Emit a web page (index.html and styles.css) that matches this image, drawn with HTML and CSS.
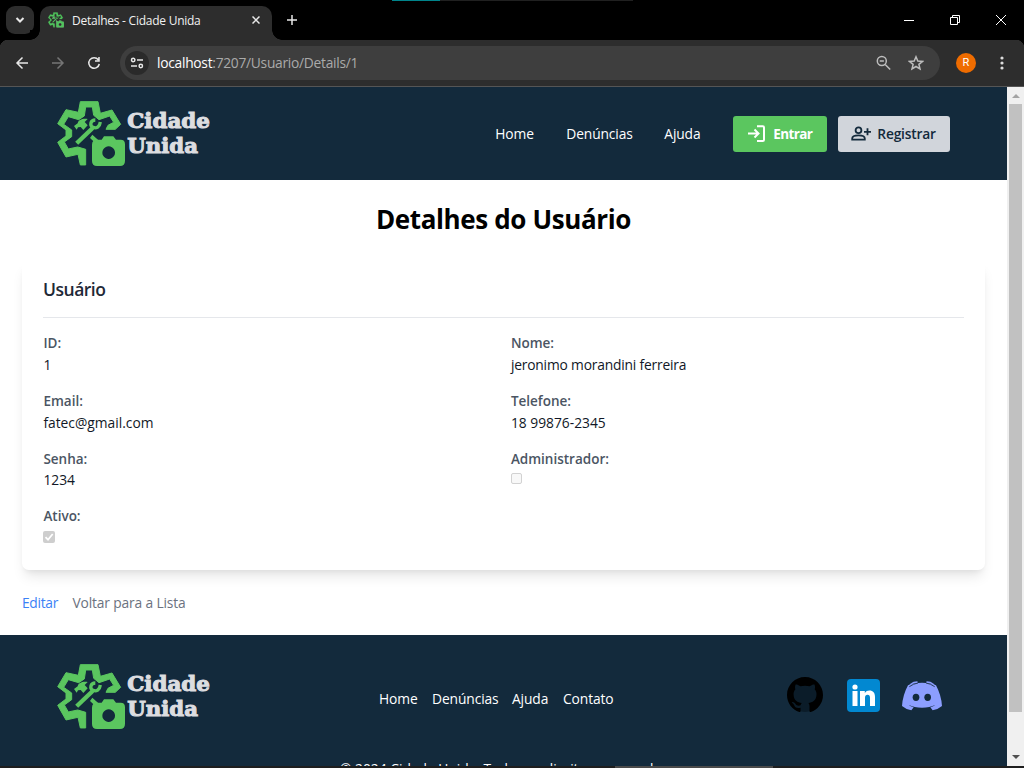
FILE: index.html
```html
<!DOCTYPE html>
<html lang="pt-BR">
<head>
<meta charset="utf-8">
<title>Detalhes - Cidade Unida</title>
<link rel="stylesheet" href="styles.css">
</head>
<body>
<svg width="0" height="0" class="defs">
  <symbol id="mark" viewBox="51 33 205 196">
    <path fill="currentColor" stroke="currentColor" stroke-width="3" d="M121 35h53l7 35 35-10 26 43-16 15h-28l6-12 17-9-12-19-32 11-16-13-4-25h-20l-4 27-17 11-31-9-14 23 24 17v20l-22 16 12 21 28-6 24 7v47h-16l-7-32-36 8-25-44 25-19v-18l-25-19 25-42 37 8z"/>
    <path fill="none" stroke="currentColor" stroke-width="13" d="M110 160l48-46"/>
    <path fill="none" stroke="currentColor" stroke-width="10" d="M166 90c-16 0-17 18-7 22 10 5 20-1 22-16"/>
    <path fill="currentColor" d="M102 108l11-8c2-10 13-15 30-13l-9 9 9 10-13 14-8-9-8 1-4 7zM157 134l21 19-9 9-19-18z"/>
    <path fill="currentColor" fill-rule="evenodd" d="M171 149h14l7-10h28l8 10h14q13 0 13 13v51q0 15-15 15h-69q-15 0-15-15v-49q0-15 15-15zM206 169a19 19 0 1 0 .1 0z"/>
  </symbol>
</svg>
<div class="tabstrip">
  <div class="progress"><i></i></div>
  <div class="tab-search"><svg width="10" height="10" viewBox="0 0 10 10"><path d="M1.500 3L5 6.500 8.500 3"/></svg></div>
  <div class="tab">
    <svg class="favicon" width="16" height="16"><use href="#mark"/></svg>
    <span class="tab-title">Detalhes - Cidade Unida</span>
    <svg width="8" height="8" viewBox="0 0 8 8"><path d="M.5.5l7 7m0-7l-7 7"/></svg>
  </div>
  <svg class="plus" width="12" height="12" viewBox="0 0 12 12"><path d="M6 1v10M1 6h10"/></svg>
  <div class="window-buttons">
    <svg width="10" height="10" viewBox="0 0 10 10"><path d="M0 5.500h10"/></svg>
    <svg width="10" height="10" viewBox="0 0 10 10"><path d="M.5 2.500h7v7h-7zM2.500 2.500v-2h7v7h-2"/></svg>
    <svg width="10" height="10" viewBox="0 0 10 10"><path d="M0 0l10 10m0-10L0 10"/></svg>
  </div>
</div>
<div class="toolbar">
  <svg class="back" width="14" height="14" viewBox="0 0 14 14"><path d="M13 7H2m5.500-5.500L2 7l5.500 5.500"/></svg>
  <svg class="forward" width="14" height="14" viewBox="0 0 14 14"><path d="M1 7h11M6.500 1.500L12 7l-5.500 5.500"/></svg>
  <svg class="reload" width="14" height="14" viewBox="0 0 14 14"><path d="M11.300 3.700A5.300 5.300 0 1 0 12.300 8M12 1v4H8"/></svg>
  <div class="address">
    <span class="site-info"><svg width="14" height="12" viewBox="0 0 14 12"><path d="M7 3h6M1 9h6"/><circle cx="3.200" cy="3" r="1.700"/><circle cx="10.800" cy="9" r="1.700"/></svg></span>
    <span class="url"><b>localhost</b>:7207/Usuario/Details/1</span>
    <svg width="16" height="16" viewBox="0 0 16 16"><circle cx="6.800" cy="6" r="4.500"/><path d="M10.200 9.500l5 5M4.700 6h4.200"/></svg>
    <svg class="star" width="16" height="16" viewBox="0 0 16 16"><path d="M8 1.800l1.800 4.200 4.700.4-3.600 3 1.100 4.600L8 11.500 4 14l1.100-4.600-3.600-3 4.700-.4z"/></svg>
  </div>
  <span class="avatar">R</span>
  <svg class="dots" width="4" height="14" viewBox="0 0 4 14"><circle cx="2" cy="2" r="1.600"/><circle cx="2" cy="7" r="1.600"/><circle cx="2" cy="12" r="1.600"/></svg>
</div>
<div class="viewport">
  <div class="page">
    <header class="header">
      <svg class="logo" viewBox="51 33 460 196"><use href="#mark" x="51" y="33" width="205" height="196"/><g class="logo-text"><text x="262" y="113" textLength="248" lengthAdjust="spacingAndGlyphs">Cidade</text><text x="262" y="188" textLength="212" lengthAdjust="spacingAndGlyphs">Unida</text></g></svg>
      <nav class="main-nav"><a class="w-home">Home</a><a class="w-den">Denúncias</a><a class="w-help">Ajuda</a></nav>
      <a class="btn enter"><svg width="18" height="18" viewBox="0 0 18 18"><path d="M0 8.500h10M6.500 4.500l4 4-4 4M9 1.300h5.800q1.200 0 1.200 1.200v12.300q0 1.200-1.200 1.200H9"/></svg><span>Entrar</span></a>
      <a class="btn register"><svg width="21" height="16" viewBox="0 0 21 16"><circle cx="8.500" cy="4.200" r="2.900"/><path d="M2.200 13.700v-1.200C2.200 10 5.500 9.300 8.500 9.300s6.300.7 6.300 3.200v1.200zM17.500 2.300v7M14 5.800h7"/></svg><span>Registrar</span></a>
    </header>
    <main>
      <h1><span>Detalhes do Usuário</span></h1>
      <section class="card">
        <h2>Usuário</h2>
        <dl>
          <div><dt>ID:</dt><dd>1</dd></div>
          <div><dt>Nome:</dt><dd class="name">jeronimo morandini ferreira</dd></div>
          <div><dt>Email:</dt><dd>fatec@gmail.com</dd></div>
          <div><dt>Telefone:</dt><dd>18 99876-2345</dd></div>
          <div><dt>Senha:</dt><dd>1234</dd></div>
          <div><dt>Administrador:</dt><dd><span class="check"></span></dd></div>
          <div><dt>Ativo:</dt><dd><span class="check on"><svg width="12" height="12" viewBox="0 0 12 12"><path d="M2.500 6.200L5 8.700 9.700 3"/></svg></span></dd></div>
        </dl>
      </section>
      <div class="actions"><a class="edit">Editar</a><a>Voltar para a Lista</a></div>
    </main>
    <footer>
      <div class="footer-row">
        <svg class="logo" viewBox="51 33 460 196"><use href="#mark" x="51" y="33" width="205" height="196"/><g class="logo-text"><text x="262" y="113" textLength="248" lengthAdjust="spacingAndGlyphs">Cidade</text><text x="262" y="188" textLength="212" lengthAdjust="spacingAndGlyphs">Unida</text></g></svg>
        <nav><a class="w-home">Home</a><a class="w-den">Denúncias</a><a class="w-help">Ajuda</a><a>Contato</a></nav>
        <svg class="github" width="36" height="36" viewBox="0 0 16 16"><circle cx="8" cy="8" r="7.500" fill="#0b1c29"/><path d="M8 0C3.580 0 0 3.580 0 8c0 3.540 2.290 6.530 5.470 7.590.4.070.55-.17.55-.38 0-.19-.01-.82-.01-1.490-2.010.37-2.530-.49-2.690-.94-.09-.23-.48-.94-.82-1.130-.28-.15-.68-.52-.01-.53.63-.01 1.080.58 1.230.82.72 1.210 1.870.87 2.330.66.07-.52.28-.87.51-1.070-1.780-.2-3.640-.89-3.640-3.950 0-.87.31-1.590.82-2.150-.08-.2-.36-1.020.08-2.120 0 0 .67-.21 2.200.82.64-.18 1.320-.27 2-.27s1.360.09 2 .27c1.530-1.040 2.200-.82 2.200-.82.44 1.100.16 1.920.08 2.120.51.56.82 1.270.82 2.150 0 3.070-1.870 3.750-3.650 3.950.29.25.54.73.54 1.480 0 1.070-.01 1.930-.01 2.200 0 .21.15.46.55.38A8.010 8.010 0 0 0 16 8c0-4.420-3.580-8-8-8z"/></svg>
        <svg class="linkedin" width="33" height="33" viewBox="0 0 33 33"><rect width="33" height="33" rx="4" fill="#0288d1"/><path fill="#fff" d="M5.500 12h5v15h-5zM13 12h4.800v2.100c1.100-1.700 2.600-2.500 4.600-2.500 3.700 0 5.600 2.300 5.600 6.300V27h-5v-8.300c0-2-.8-3-2.400-3-1.700 0-2.600 1.200-2.600 3V27h-5z"/><circle cx="8" cy="8" r="2.600" fill="#fff"/></svg>
        <svg class="discord" width="40" height="30" viewBox="0 0 120 90"><path fill="#8c9eff" d="M18 13Q34 5 60 5t42 8q16 30 18 62-13 11-28 13l-7-9q9-3 16-8-18 9-41 9t-41-9q7 5 16 8l-7 9Q13 86 0 75 2 43 18 13z"/><path fill="#8c9eff" d="M25 8Q34 1 46 1l2 4Q33 6 20 15zm70 0Q86 1 74 1l-2 4q15 1 28 10z"/><path fill="none" stroke="#132a3c" stroke-width="2.500" d="M22 17Q34 8 48 6m50 11Q86 8 72 6"/><ellipse cx="42" cy="49" rx="10" ry="11" fill="#132a3c"/><ellipse cx="77" cy="49" rx="10" ry="11" fill="#132a3c"/></svg>
      </div>
      <p>© 2024 Cidade Unida. Todos os direitos reservados.</p>
    </footer>
  </div>
  <div class="scrollbar"><i class="up"></i><i class="thumb"></i><i class="down"></i></div>
</div>
<div class="taskbar"><i></i></div>
</body>
</html>
```
FILE: styles.css
```css
* { box-sizing: border-box; }
body { margin: 0; width: 1024px; height: 768px; overflow: hidden; display: flex; flex-direction: column; font-family: "Open Sans", "Noto Sans", sans-serif; background: #2d2d2d; }
svg { flex: none; display: block; }
.defs { position: absolute; }
h1, h2, p, dl, dd { margin: 0; }

.tabstrip { height: 40px; flex: none; background: #000; display: flex; padding: 6px 0 0 6px; position: relative; }
.tabstrip svg, .toolbar svg { fill: none; stroke: #e8e8e8; stroke-width: 1.500; }
.progress { position: absolute; top: 0; left: 392px; width: 241px; height: 1px; background: #202020; }
.progress i { display: block; width: 48px; height: 1px; background: #00848b; }
.tab-search { width: 28px; height: 28px; border-radius: 9px; background: #2d2d2d; display: grid; place-items: center; }
.tab-search svg { stroke-width: 2; }
.tab { position: relative; margin-left: 6px; width: 232px; height: 34px; border-radius: 10px 10px 0 0; background: #2d2d2d; display: flex; align-items: center; padding: 0 12px 6px 8px; }
.tab::before, .tab::after { content: ""; position: absolute; bottom: 0; width: 10px; height: 10px; }
.tab::before { left: -10px; background: radial-gradient(circle at 0 0, #000 9.500px, #2d2d2d 10px); }
.tab::after { right: -10px; background: radial-gradient(circle at 100% 0, #000 9.500px, #2d2d2d 10px); }
.tabstrip .favicon { color: #4fc45c; }
.tab-title { margin-left: 8px; flex: 1; font-size: 12px; letter-spacing: -.25px; color: #f1f1f1; white-space: nowrap; }
.plus { margin: 8px 0 0 14px; }
.window-buttons { margin-left: auto; display: flex; gap: 36px; padding: 9px 18px 0 0; }
.window-buttons svg { stroke: #fff; stroke-width: 1; }

.toolbar { height: 47px; flex: none; display: flex; align-items: center; background: radial-gradient(circle at 8px 8px, #2d2d2d 8px, #000 8.500px) 0 0 / 8px 8px no-repeat, radial-gradient(circle at 0 8px, #2d2d2d 8px, #000 8.500px) 100% 0 / 8px 8px no-repeat, #2d2d2d; border-bottom: 1px solid #555; padding-left: 15px; }
.toolbar .forward { margin-left: 22px; stroke: #757575; }
.toolbar .reload { margin-left: 22px; }
.address { margin-left: 19px; width: 820px; height: 34px; border-radius: 17px; background: #3e3e3e; display: flex; align-items: center; padding: 0 16px 0 5px; }
.site-info { width: 24px; height: 24px; border-radius: 50%; background: #2a2a2a; display: grid; place-items: center; }
.url { margin-left: 8px; flex: 1; font-size: 13.800px; letter-spacing: -.28px; line-height: 20px; color: #aaa; }
.url b { font-weight: 400; color: #fff; }
.toolbar .address > svg { stroke: #bdbdbd; }
.toolbar .address .star { margin-left: 17px; }
.avatar { margin-left: 16px; width: 20px; height: 20px; border-radius: 50%; background: #ef6c00; color: #fff; font: 11px/20px Roboto, sans-serif; text-align: center; }
.toolbar .dots { margin-left: 24px; fill: #ddd; stroke: none; }

.viewport { height: 679px; flex: none; display: flex; overflow: hidden; }
.page { width: 1007px; background: #fff; font-size: 13.800px; }
.header { height: 93px; background: #132a3c; display: flex; align-items: center; padding-left: 57px; color: #fff; }
.logo { width: 153.300px; height: 65.300px; color: #5bc65f; }
.logo-text { fill: #dcdde0; stroke: #dcdde0; stroke-width: 3; font: bold 59px "DejaVu Serif", serif; }
.main-nav { display: flex; margin-left: 285px; width: 238px; letter-spacing: -.12px; }
.main-nav .w-home { width: 71px; }
.main-nav .w-den { width: 98px; }
.btn { height: 36px; border-radius: 3px; display: flex; align-items: center; font-weight: 600; }
.btn svg { fill: none; stroke: currentColor; stroke-width: 2; }
.enter { width: 94px; padding-left: 15px; gap: 7px; background: #5bc65f; font-size: 13.500px; font-weight: 700; letter-spacing: -.6px; }
.register { width: 112px; margin-left: 11px; padding-left: 12px; gap: 6px; background: #d1d5db; color: #132a3c; letter-spacing: -.2px; }
.register svg { stroke-width: 1.800; }

main { height: 455px; padding: 20px 22px 0; }
h1 { height: 61px; font-size: 26px; line-height: 39px; letter-spacing: -.37px; text-align: center; color: #000; white-space: nowrap; }
.card { height: 309px; border-radius: 7px; padding: 17px 21px 0; box-shadow: 0 9px 13px -3px rgba(0,0,0,.1), 0 4px 5px -2px rgba(0,0,0,.05); }
h2 { height: 40px; font-size: 17.500px; line-height: 22px; letter-spacing: -.5px; font-weight: 600; color: #1f2937; border-bottom: 1px solid #e5e7eb; }
dl { display: grid; grid-template-columns: 1fr 1fr; grid-auto-rows: 57.650px; column-gap: 14px; padding-top: 14.300px; color: #111827; }
dt { font-weight: 600; line-height: 22px; color: #4b5563; font-size: 13.500px; }
dt, dd { padding-left: .4px; }
dd { line-height: 22px; margin-top: -.2px; }
.name { letter-spacing: -.18px; }
.check { display: block; width: 11px; height: 11px; margin-top: 4px; border: 1px solid #d2d2d2; border-radius: 2px; background: #f8f8f8; }
.check.on { width: 12px; height: 12px; border: 0; background: #cecece; }
.check svg { fill: none; stroke: #fff; stroke-width: 1.800; }
.actions { margin-top: 22px; display: flex; line-height: 22px; letter-spacing: -.15px; color: #6b7280; }
.edit { width: 50.500px; letter-spacing: -.3px; color: #3b82f6; }

footer { height: 160px; background: #132a3c; color: #fff; padding: 29px 0 0 57px; }
.footer-row { display: flex; align-items: center; height: 65px; }
footer nav { display: flex; margin: 4px 0 0 168.700px; width: 408.500px; letter-spacing: -.1px; }
footer nav .w-home { width: 53px; }
footer nav .w-den { width: 80px; }
footer nav .w-help { width: 51px; }
.github { fill: #000; margin-top: -3px; }
.linkedin { margin: -2px 22px 0 23.500px; }
.discord { margin-top: -1px; }
footer p { margin: 29px 0 0 283px; white-space: nowrap; line-height: 22px; }

.scrollbar { width: 17px; background: #f0f0f0; display: flex; flex-direction: column; align-items: center; }
.scrollbar i { flex: none; }
.up { margin-top: 7px; border: 4px solid transparent; border-top: 0; border-bottom-color: #a3a3a3; }
.thumb { width: 13px; height: 608px; margin-top: 6px; background: #c1c1c1; }
.down { margin-top: 43px; border: 4px solid transparent; border-bottom: 0; border-top-color: #505050; }
.taskbar { height: 2px; flex: none; background: #1e1e1e; }
.taskbar i { display: block; height: 2px; width: 158px; margin-left: 615px; background: #4a4a4a; }
```
